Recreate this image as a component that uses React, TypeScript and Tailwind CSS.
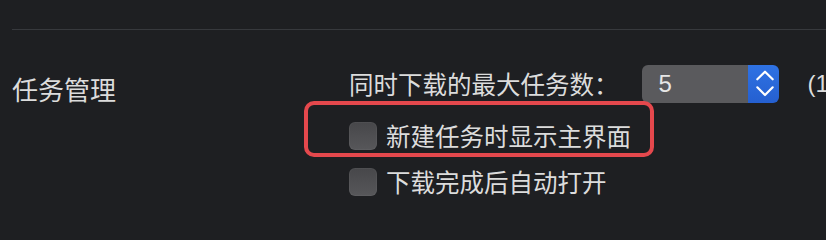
import { useState } from "react";

const CJK = "font-['PingFang_SC','Noto_Sans_CJK_SC',sans-serif]";

function Checkbox({ label }: { label: string }) {
  const [checked, setChecked] = useState(false);
  return (
    <label className="flex items-center gap-[9px] h-[28px] cursor-default">
      <button
        type="button"
        onClick={() => setChecked(!checked)}
        className="shrink-0 w-[28px] h-[28px] rounded-[6px] bg-gradient-to-b from-[#47474a] to-[#57575a] shadow-[inset_0_0_0_1px_rgba(255,255,255,0.04)]"
      />
      <span className={`${CJK} text-[24.5px] leading-[28px] text-[#dcdcdc] whitespace-nowrap`}>{label}</span>
    </label>
  );
}

function Stepper({ value }: { value: number }) {
  return (
    <div className="flex shrink-0 w-[137px] h-[38px] rounded-[6px] overflow-hidden">
      <div className="flex-1 bg-[#5a5a5d] flex items-center pl-[17px]">
        <span className="font-['Liberation_Sans',sans-serif] text-[24px] text-[#e6e6e6]">{value}</span>
      </div>
      <div className="w-[31px] bg-gradient-to-b from-[#2f72e4] to-[#255fd0]">
        <svg width="31" height="38" viewBox="0 0 31 38" fill="none" stroke="#fff" strokeWidth="2.2" strokeLinecap="round" strokeLinejoin="round">
          <path d="M9.3 14.3 17 6.7 24.7 14.3" />
          <path d="M9.3 22.3 17 30 24.7 22.3" />
        </svg>
      </div>
    </div>
  );
}

export default function App() {
  return (
    <div className="min-h-screen bg-[#1e1f22]">
      <div className="w-[826px] h-[204px] overflow-hidden">
        <div className="pt-[29px] pl-3">
          <div className="h-px bg-[#37393d]" />
        </div>
        <div className="flex pl-3">
          <div className={`${CJK} shrink-0 w-[337px] pt-[46px] text-[26px] leading-[26px] text-[#dcdcdc]`}>任务管理</div>
          <div className="flex flex-col shrink-0 pt-[35px]">
            <div className="flex items-center h-[38px]">
              <span className={`${CJK} text-[24.5px] text-[#dcdcdc] whitespace-nowrap`}>同时下载的最大任务数：</span>
              <div className="ml-[23px]"><Stepper value={5} /></div>
              <span className="ml-[29px] font-['Liberation_Sans',sans-serif] text-[24px] text-[#dcdcdc] whitespace-nowrap">(1</span>
            </div>
            <div className="relative mt-[19px]">
              <div className="absolute left-[-45px] top-[-21px] w-[350px] h-[56px] rounded-[10px] border-4 border-[#e5484d]" />
              <Checkbox label="新建任务时显示主界面" />
            </div>
            <div className="mt-[18px]">
              <Checkbox label="下载完成后自动打开" />
            </div>
          </div>
        </div>
      </div>
    </div>
  );
}
